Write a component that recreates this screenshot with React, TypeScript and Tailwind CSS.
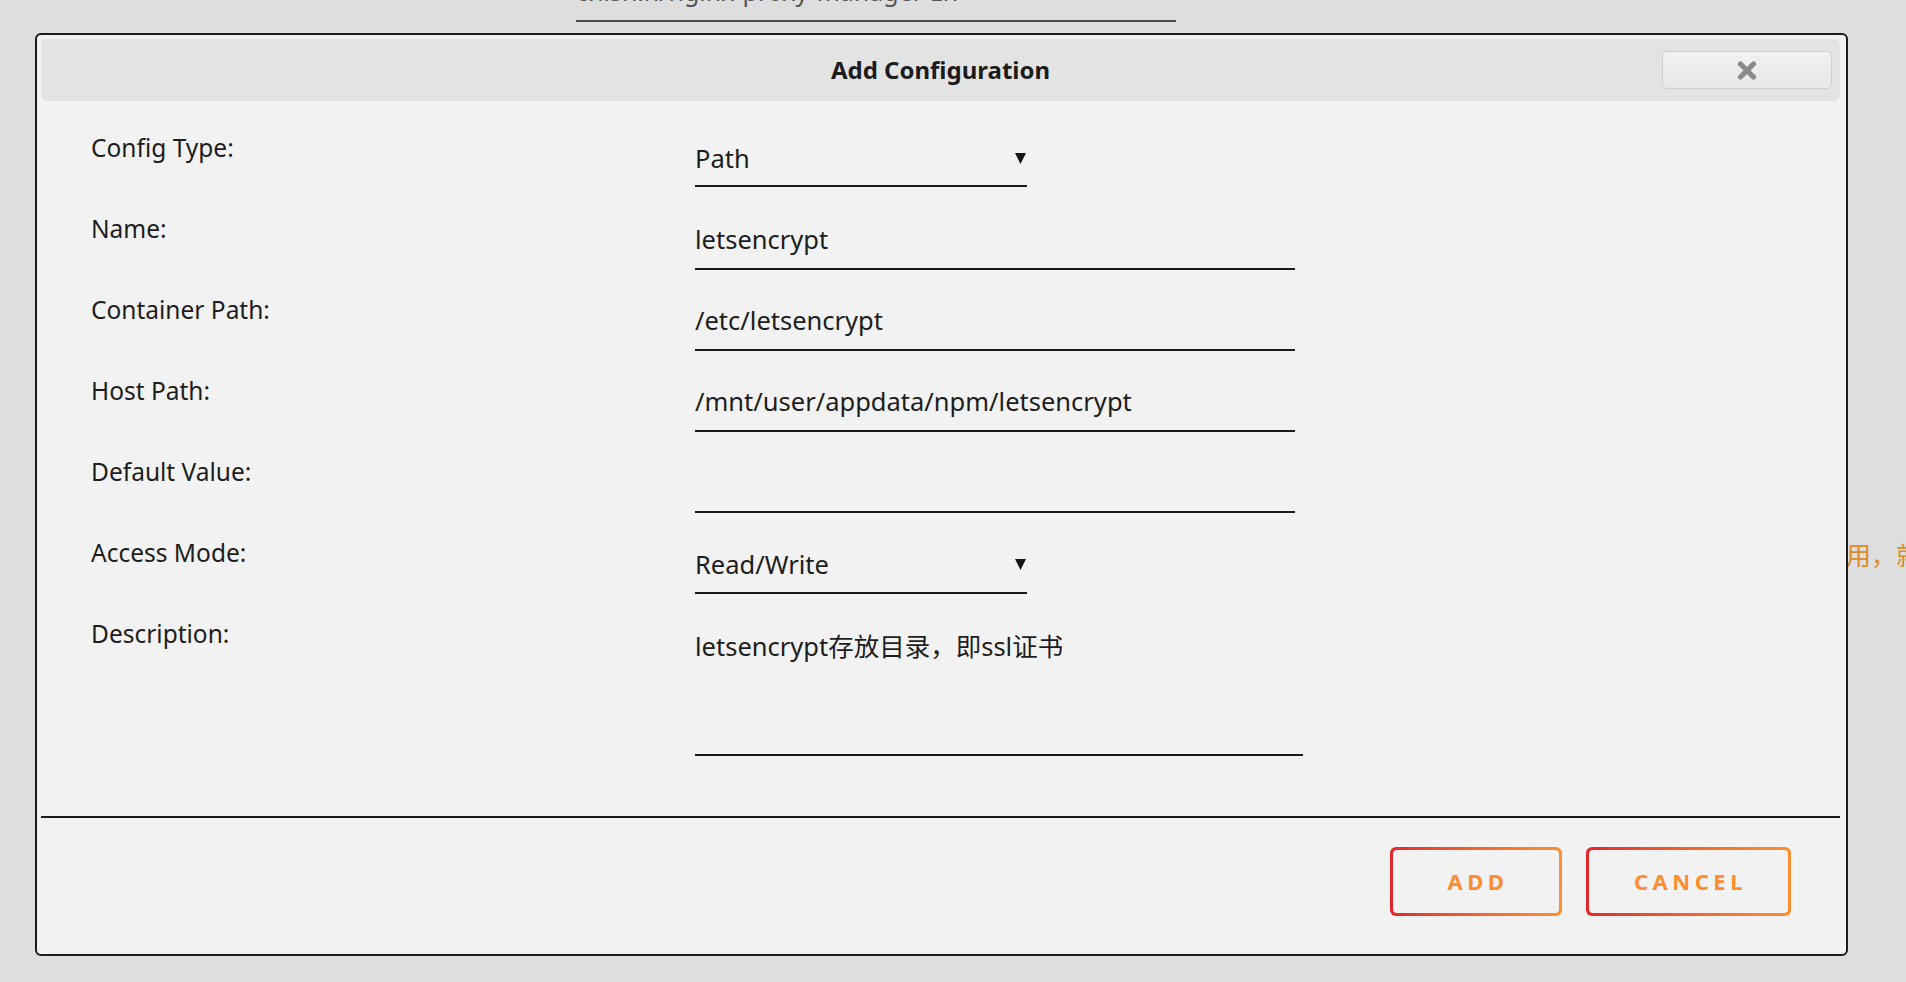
import React from "react";

function Field({ label, children }: { label: string; children: React.ReactNode }) {
  return (
    <div className="flex h-[81px] shrink-0 items-start">
      <div className="w-[604px] shrink-0 text-[24.5px] leading-[36px] text-[#1d1d1d]">{label}</div>
      <div className="pt-[10px]">{children}</div>
    </div>
  );
}

function TextInput({ value }: { value?: string }) {
  return (
    <div className="h-[49px] w-[600px] border-b-2 border-[#1b1b1b] pb-[11px] text-[25.5px] leading-[36px] text-[#1d1d1d] whitespace-nowrap">
      {value}
    </div>
  );
}

function SelectInput({ value, height }: { value: string; height: string }) {
  return (
    <div className={`flex ${height} w-[332px] items-center justify-between border-b-2 border-[#1b1b1b] pb-[9px] text-[25.5px] leading-[36px] text-[#1d1d1d]`}>
      <span>{value}</span>
      <svg width="11" height="11" viewBox="0 0 11 11" className="mr-[1px]">
        <polygon points="0,0 11,0 5.5,11" fill="#151515" />
      </svg>
    </div>
  );
}

function GradientButton({ label, width }: { label: string; width: string }) {
  return (
    <div className={`h-[69px] ${width} rounded-[6px] bg-linear-to-r from-[#e2262b] to-[#ff902e] p-[3px]`}>
      <div className="flex h-full w-full items-center justify-center rounded-[4px] bg-[#f2f2f2] pl-[4px] text-[22px] font-bold tracking-[4.5px] text-[#ff8c2f]">
        {label}
      </div>
    </div>
  );
}

export default function App() {
  return (
    <div className="relative h-[982px] w-full overflow-hidden bg-[#dedede] font-['Noto_Sans','Noto_Sans_CJK_SC',sans-serif]">
      {/* background page content */}
      <div className="ml-[576px] mt-[-27px] w-[600px] border-b-2 border-[#4a4a4a] pb-[11px] text-[25px] leading-[36px] text-[#555555] whitespace-nowrap">
        chishin/nginx-proxy-manager-zh
      </div>
      <div className="ml-[1846px] mt-[515px] whitespace-nowrap text-[25px] leading-[36px] text-[#d98b2b]">
        用，就可以
      </div>

      {/* dialog */}
      <div className="absolute left-[35px] top-[33px] flex h-[923px] w-[1813px] flex-col rounded-[6px] border-2 border-[#1b1b1b] bg-[#f2f2f2] pl-[4px] pr-[6px] pt-[4px]">
        <div className="grid h-[62px] shrink-0 grid-cols-[1fr_auto_1fr] items-center rounded-[6px] bg-[#e3e3e3]">
          <div />
          <div className="text-[24px] font-bold text-[#1c1c1c]">Add Configuration</div>
          <div className="flex justify-end pr-[8px]">
            <div className="flex h-[38px] w-[170px] items-center justify-center rounded-[5px] border border-[#d0d0d0] bg-linear-to-b from-[#f1f1f1] to-[#e7e7e7]">
              <svg width="20" height="19" viewBox="0 0 20 19">
                <path d="M3.5 3 L16.5 16 M16.5 3 L3.5 16" stroke="#8a8a8a" strokeWidth="5.2" strokeLinecap="round" />
              </svg>
            </div>
          </div>
        </div>

        <div className="flex h-[715px] shrink-0 flex-col pl-[50px] pt-[29px]">
          <Field label="Config Type:">
            <SelectInput value="Path" height="h-[47px]" />
          </Field>
          <Field label="Name:">
            <TextInput value="letsencrypt" />
          </Field>
          <Field label="Container Path:">
            <TextInput value="/etc/letsencrypt" />
          </Field>
          <Field label="Host Path:">
            <TextInput value="/mnt/user/appdata/npm/letsencrypt" />
          </Field>
          <Field label="Default Value:">
            <TextInput />
          </Field>
          <Field label="Access Mode:">
            <SelectInput value="Read/Write" height="h-[49px]" />
          </Field>
          <div className="flex items-start">
            <div className="w-[604px] shrink-0 text-[24.5px] leading-[36px] text-[#1d1d1d]">Description:</div>
            <div className="pt-[10px]">
              <div className="h-[130px] w-[608px] border-b-2 border-[#1b1b1b] pt-[2px] text-[25.5px] leading-[36px] text-[#1d1d1d]">
                letsencrypt存放目录，即ssl证书
              </div>
            </div>
          </div>
        </div>

        <div className="h-[2px] shrink-0 bg-[#1b1b1b]" />

        <div className="flex justify-end gap-[24px] pr-[49px] pt-[29px]">
          <GradientButton label="ADD" width="w-[172px]" />
          <GradientButton label="CANCEL" width="w-[205px]" />
        </div>
      </div>
    </div>
  );
}
